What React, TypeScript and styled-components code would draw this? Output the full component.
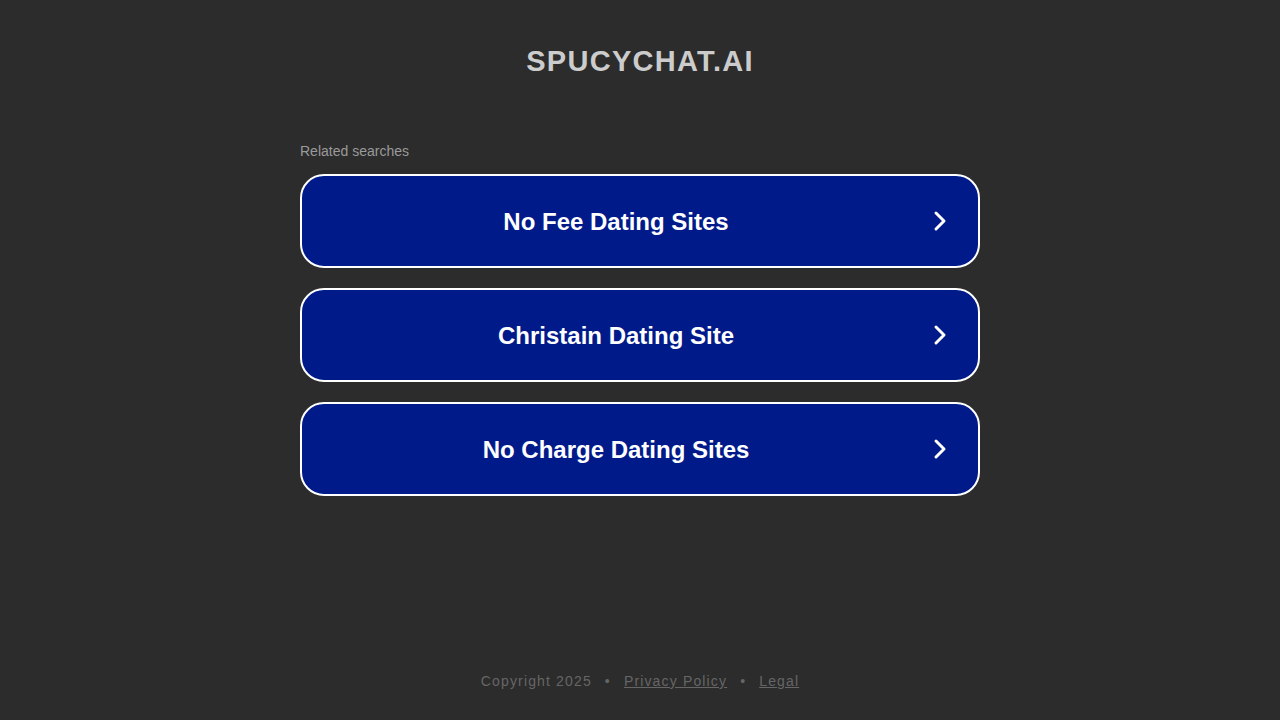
import styled, { createGlobalStyle } from 'styled-components'

const GlobalStyle = createGlobalStyle`
  html, body {
    margin: 0;
    padding: 0;
    background: #2c2c2c;
    font-family: "Liberation Sans", Arial, sans-serif;
  }
`

const searches = ['No Fee Dating Sites', 'Christain Dating Site', 'No Charge Dating Sites']

const Page = styled.div`
  width: 1280px;
  height: 720px;
  display: flex;
  flex-direction: column;
  align-items: center;
`

const Title = styled.h1`
  margin: 43px 0 0;
  font-size: 29px;
  line-height: 36px;
  font-weight: bold;
  letter-spacing: 1.3px;
  color: #cccccc;
`

const Section = styled.div`
  width: 680px;
  margin-top: 63px;
  display: flex;
  flex-direction: column;
`

const Label = styled.div`
  font-size: 14px;
  line-height: 18px;
  color: #9a9a9a;
  margin-bottom: 14px;
`

const List = styled.div`
  display: flex;
  flex-direction: column;
  gap: 20px;
`

const SearchButton = styled.a`
  box-sizing: border-box;
  height: 94px;
  border: 2px solid #ffffff;
  border-radius: 24px;
  background: #011a8a;
  color: #ffffff;
  display: flex;
  align-items: center;
  padding: 0 28px 0 0;
  text-decoration: none;
  cursor: pointer;
`

const SearchText = styled.span`
  flex: 1;
  text-align: center;
  font-size: 24px;
  font-weight: bold;
  padding-top: 2px;
`

const Arrow = styled.svg`
  width: 20px;
  height: 24px;
`

const Footer = styled.div`
  margin-top: auto;
  margin-bottom: 30px;
  display: flex;
  gap: 13px;
  font-size: 14px;
  line-height: 18px;
  letter-spacing: 1.15px;
  color: #666666;
`

const FooterLink = styled.a`
  color: #666666;
  text-decoration: underline;
`

export default function App() {
  return (
    <>
      <GlobalStyle />
      <Page>
        <Title>SPUCYCHAT.AI</Title>
        <Section>
          <Label>Related searches</Label>
          <List>
            {searches.map((s) => (
              <SearchButton key={s}>
                <SearchText>{s}</SearchText>
                <Arrow viewBox="0 0 20 24">
                  <path
                    d="M6 4 L14 12 L6 20"
                    fill="none"
                    stroke="#ffffff"
                    strokeWidth="3"
                    strokeLinecap="round"
                    strokeLinejoin="round"
                  />
                </Arrow>
              </SearchButton>
            ))}
          </List>
        </Section>
        <Footer>
          <span>Copyright 2025</span>
          <span>•</span>
          <FooterLink>Privacy Policy</FooterLink>
          <span>•</span>
          <FooterLink>Legal</FooterLink>
        </Footer>
      </Page>
    </>
  )
}
